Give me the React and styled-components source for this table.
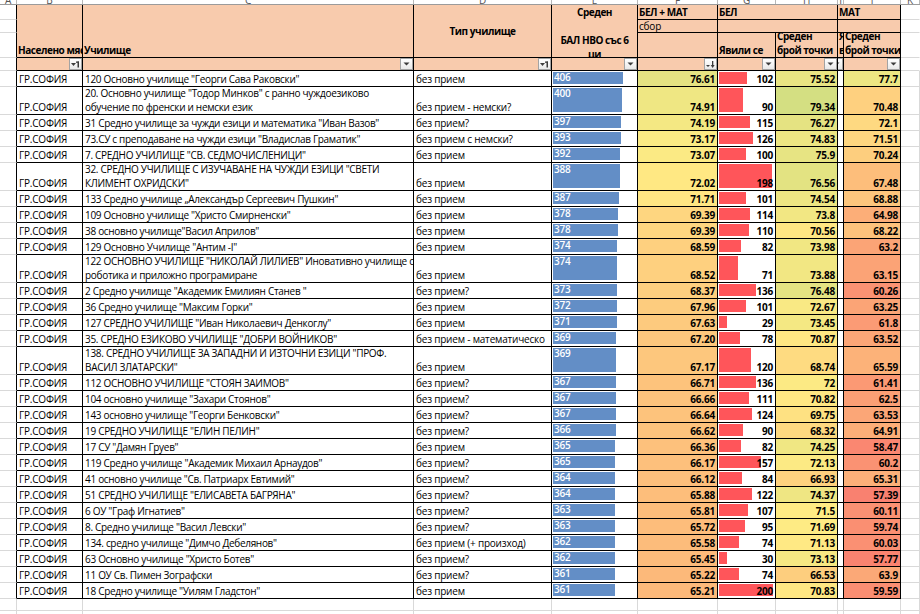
import React from "react";
import styled, { createGlobalStyle } from "styled-components";

// sheet columns: A (narrow) .. J, then K as the grey leftover
const GRID = "17px 66px 331px 138px 86px 80px 58px 62px 6px 57px 1fr";
const LINE = "#000";
const GRIDLINE = "#d9d9d9";
const PEACH = "#f8cbad";

const RED = [248, 105, 107];
const YEL = [255, 235, 132];
const GRN = [99, 190, 123];

function scale(v, lo, mid, hi) {
  let a, b, t;
  if (v <= mid) {
    a = RED; b = YEL; t = (v - lo) / (mid - lo);
  } else {
    a = YEL; b = GRN; t = (v - mid) / (hi - mid);
  }
  t = Math.max(0, Math.min(1, t));
  const c = a.map((x, i) => Math.round(x + (b[i] - x) * t));
  return `rgb(${c.join(",")})`;
}

const rows = [
  { name: ['120 Основно училище "Георги Сава Раковски"'], type: "без прием", bal: 406, sum: "76.61", bel: 102, belAvg: "75.52", mat: "77.7" },
  { name: ['20. Основно училище "Тодор Минков" с ранно чуждоезиково', "обучение по френски и немски език"], type: "без прием - немски?", bal: 400, sum: "74.91", bel: 90, belAvg: "79.34", mat: "70.48" },
  { name: ['31 Средно училище за чужди езици и математика "Иван Вазов"'], type: "без прием?", bal: 397, sum: "74.19", bel: 115, belAvg: "76.27", mat: "72.1" },
  { name: ['73.СУ с преподаване на чужди езици "Владислав Граматик"'], type: "без прием с немски?", bal: 393, sum: "73.17", bel: 126, belAvg: "74.83", mat: "71.51" },
  { name: ['7. СРЕДНО УЧИЛИЩЕ "СВ. СЕДМОЧИСЛЕНИЦИ"'], type: "без прием", bal: 392, sum: "73.07", bel: 100, belAvg: "75.9", mat: "70.24" },
  { name: ['32. СРЕДНО УЧИЛИЩЕ С ИЗУЧАВАНЕ НА ЧУЖДИ ЕЗИЦИ "СВЕТИ', 'КЛИМЕНТ ОХРИДСКИ"'], type: "без прием", bal: 388, sum: "72.02", bel: 198, belAvg: "76.56", mat: "67.48" },
  { name: ['133 Средно училище „Александър Сергеевич Пушкин"'], type: "без прием", bal: 387, sum: "71.71", bel: 101, belAvg: "74.54", mat: "68.88" },
  { name: ['109 Основно училище "Христо Смирненски"'], type: "без прием", bal: 378, sum: "69.39", bel: 114, belAvg: "73.8", mat: "64.98" },
  { name: ['38 основно училище"Васил Априлов"'], type: "без прием", bal: 378, sum: "69.39", bel: 110, belAvg: "70.56", mat: "68.22" },
  { name: ['129 Основно Училище "Антим -I"'], type: "без прием", bal: 374, sum: "68.59", bel: 82, belAvg: "73.98", mat: "63.2" },
  { name: ['122 ОСНОВНО УЧИЛИЩЕ "НИКОЛАЙ ЛИЛИЕВ" Иновативно училище с', "роботика и приложно програмиране"], type: "без прием", bal: 374, sum: "68.52", bel: 71, belAvg: "73.88", mat: "63.15" },
  { name: ['2 Средно училище "Академик Емилиян Станев "'], type: "без прием?", bal: 373, sum: "68.37", bel: 136, belAvg: "76.48", mat: "60.26" },
  { name: ['36 Средно училище "Максим Горки"'], type: "без прием", bal: 372, sum: "67.96", bel: 101, belAvg: "72.67", mat: "63.25" },
  { name: ['127 СРЕДНО УЧИЛИЩЕ "Иван Николаевич Денкоглу"'], type: "без прием", bal: 371, sum: "67.63", bel: 29, belAvg: "73.45", mat: "61.8" },
  { name: ['35. СРЕДНО ЕЗИКОВО УЧИЛИЩЕ "ДОБРИ ВОЙНИКОВ"'], type: "без прием - математическо", bal: 369, sum: "67.20", bel: 78, belAvg: "70.87", mat: "63.52" },
  { name: ['138. СРЕДНО УЧИЛИЩЕ ЗА ЗАПАДНИ И ИЗТОЧНИ ЕЗИЦИ "ПРОФ.', 'ВАСИЛ ЗЛАТАРСКИ"'], type: "без прием", bal: 369, sum: "67.17", bel: 120, belAvg: "68.74", mat: "65.59" },
  { name: ['112 ОСНОВНО УЧИЛИЩЕ "СТОЯН ЗАИМОВ"'], type: "без прием?", bal: 367, sum: "66.71", bel: 136, belAvg: "72", mat: "61.41" },
  { name: ['104 основно училище "Захари Стоянов"'], type: "без прием?", bal: 367, sum: "66.66", bel: 111, belAvg: "70.82", mat: "62.5" },
  { name: ['143 основно училище "Георги Бенковски"'], type: "без прием?", bal: 367, sum: "66.64", bel: 124, belAvg: "69.75", mat: "63.53" },
  { name: ['19 СРЕДНО УЧИЛИЩЕ "ЕЛИН ПЕЛИН"'], type: "без прием?", bal: 366, sum: "66.62", bel: 90, belAvg: "68.32", mat: "64.91" },
  { name: ['17 СУ "Дамян Груев"'], type: "без прием", bal: 365, sum: "66.36", bel: 82, belAvg: "74.25", mat: "58.47" },
  { name: ['119 Средно училище "Академик Михаил Арнаудов"'], type: "без прием?", bal: 365, sum: "66.17", bel: 157, belAvg: "72.13", mat: "60.2" },
  { name: ['41 основно училище "Св. Патриарх Евтимий"'], type: "без прием?", bal: 364, sum: "66.12", bel: 84, belAvg: "66.93", mat: "65.31" },
  { name: ['51 СРЕДНО УЧИЛИЩЕ "ЕЛИСАВЕТА БАГРЯНА"'], type: "без прием?", bal: 364, sum: "65.88", bel: 122, belAvg: "74.37", mat: "57.39" },
  { name: ['6 ОУ "Граф Игнатиев"'], type: "без прием?", bal: 363, sum: "65.81", bel: 107, belAvg: "71.5", mat: "60.11" },
  { name: ['8. Средно училище "Васил Левски"'], type: "без прием?", bal: 363, sum: "65.72", bel: 95, belAvg: "71.69", mat: "59.74" },
  { name: ['134. средно училище "Димчо Дебелянов"'], type: "без прием (+ произход)", bal: 362, sum: "65.58", bel: 74, belAvg: "71.13", mat: "60.03" },
  { name: ['63 Основно училище "Христо Ботев"'], type: "без прием?", bal: 362, sum: "65.45", bel: 30, belAvg: "73.13", mat: "57.77" },
  { name: ["11 ОУ Св. Пимен Зографски"], type: "без прием?", bal: 361, sum: "65.22", bel: 74, belAvg: "66.53", mat: "63.9" },
  { name: ['18 Средно училище "Уилям Гладстон"'], type: "без прием", bal: 361, sum: "65.21", bel: 200, belAvg: "70.83", mat: "59.59" },
];

const GlobalStyle = createGlobalStyle`
  * { box-sizing: border-box; }
  html, body { margin: 0; padding: 0; background: #fff; }
  body {
    font-family: "Open Sans", "Liberation Sans", sans-serif;
    font-size: 10px;
    letter-spacing: -0.2px;
    color: #000;
  }
`;

const Sheet = styled.div`
  width: 920px;
  height: 614px;
  overflow: hidden;
  background: #fff;
`;

const LetterStrip = styled.div`
  display: grid;
  grid-template-columns: ${GRID};
  height: 5px;
  overflow: hidden;
  border-bottom: 1px solid #9b9b9b;
`;

const Letter = styled.div`
  display: flex;
  justify-content: center;
  align-items: flex-end;
  overflow: hidden;
  border-right: 1px solid #b8b8b8;
  color: #555;
  line-height: 8px;
`;

const HeadGrid = styled.div`
  display: grid;
  grid-template-columns: ${GRID};
  grid-template-rows: 15px 13px 25px 13px;
`;

const HeadGutter = styled.div`
  grid-column: ${(p) => p.$col};
  grid-row: ${(p) => p.$row};
  border-bottom: 1px solid ${GRIDLINE};
  border-right: 1px solid ${(p) => (p.$edge ? LINE : "transparent")};
`;

const HeadCell = styled.div`
  grid-column: ${(p) => p.$col};
  grid-row: ${(p) => p.$row};
  background: ${PEACH};
  border-right: 1px solid ${LINE};
  border-bottom: 1px solid ${LINE};
  overflow: hidden;
  white-space: nowrap;
  display: flex;
  flex-direction: column;
  justify-content: ${(p) => ({ top: "flex-start", middle: "center", bottom: "flex-end" }[p.$v || "bottom"])};
  align-items: ${(p) => (p.$center ? "center" : "flex-start")};
  padding: 0 ${(p) => (p.$center ? "2px" : "1px")};
  font-weight: ${(p) => (p.$light ? 400 : 700)};
  letter-spacing: ${(p) => (p.$light ? "-0.2px" : "-0.45px")};
  line-height: 14px;
`;

const FilterCell = styled.div`
  grid-column: ${(p) => p.$col};
  grid-row: 4;
  background: ${PEACH};
  border-right: 1px solid ${LINE};
  border-bottom: 1px solid ${LINE};
  display: flex;
  justify-content: flex-end;
  overflow: hidden;
`;

const FilterButton = styled.div`
  flex: 0 0 13px;
  height: 12px;
  border: 1px solid #a3a3a3;
  background: linear-gradient(#ffffff, #e9e9e9);
  display: flex;
  align-items: center;
  justify-content: center;
`;

const DataRow = styled.div`
  display: grid;
  grid-template-columns: ${GRID};
  height: ${(p) => p.$h}px;
`;

const Gutter = styled.div`
  border-bottom: 1px solid ${GRIDLINE};
  border-right: 1px solid ${(p) => (p.$edge ? LINE : GRIDLINE)};
`;

const Cell = styled.div`
  position: relative;
  min-width: 0;
  overflow: hidden;
  white-space: nowrap;
  border-right: 1px solid ${LINE};
  border-bottom: 1px solid ${LINE};
  display: flex;
  flex-direction: column;
  justify-content: ${(p) => (p.$top ? "flex-start" : "flex-end")};
  align-items: ${(p) => (p.$right ? "flex-end" : "flex-start")};
  padding: 0 2px;
  font-weight: ${(p) => (p.$bold ? 700 : 400)};
  letter-spacing: ${(p) => (p.$tight ? "-0.3px" : "-0.2px")};
  line-height: 13.5px;
`;

const Bar = styled.div`
  position: absolute;
  left: 1px;
  top: 1px;
  bottom: 2px;
  background: ${(p) => p.$color};
`;

const CellText = styled.span`
  position: relative;
  color: ${(p) => (p.$light ? "#fff" : "#000")};
  font-weight: ${(p) => (p.$light ? 600 : "inherit")};
`;

const GhostCell = styled.div`
  border-right: 1px solid ${GRIDLINE};
  border-bottom: 1px solid ${GRIDLINE};
`;

function DropIcon({ kind }) {
  if (kind === "filter") {
    return (
      <svg width="9" height="7" viewBox="0 0 9 7">
        <polygon points="0,2 5,2 2.5,5" fill="#3c3c3c" />
        <rect x="6.5" y="0.5" width="1.5" height="6" fill="#3c3c3c" />
        <rect x="5" y="0.5" width="3" height="1.3" fill="#3c3c3c" />
      </svg>
    );
  }
  if (kind === "sort") {
    return (
      <svg width="9" height="7" viewBox="0 0 9 7">
        <polygon points="0,4 4,4 2,6" fill="#3c3c3c" />
        <rect x="6" y="0" width="1.3" height="5" fill="#3c3c3c" />
        <polygon points="4.7,4 8.6,4 6.65,7" fill="#3c3c3c" />
      </svg>
    );
  }
  return (
    <svg width="7" height="4" viewBox="0 0 7 4">
      <polygon points="0.5,0.5 6.5,0.5 3.5,3.5" fill="#3c3c3c" />
    </svg>
  );
}

const letters = ["A", "B", "C", "D", "E", "F", "G", "H", "I", "J", "K"];

const filters = [
  { col: 2, kind: "filter" },
  { col: 3 },
  { col: 4, kind: "filter" },
  { col: 5 },
  { col: 6, kind: "sort" },
  { col: 7 },
  { col: 8 },
  { col: 9 },
  { col: 10 },
];

function Header() {
  return (
    <HeadGrid>
      {[1, 2, 3, 4].map((r) => (
        <HeadGutter key={"a" + r} $col={1} $row={r} $edge />
      ))}
      {[1, 2, 3, 4].map((r) => (
        <HeadGutter key={"k" + r} $col={11} $row={r} />
      ))}
      <HeadCell $col="2" $row="1 / 4">Населено място</HeadCell>
      <HeadCell $col="3" $row="1 / 4">Училище</HeadCell>
      <HeadCell $col="4" $row="1 / 4" $v="middle" $center>
        Тип училище
      </HeadCell>
      <HeadCell $col="5" $row="1 / 4" $v="top" $center>
        <span>Среден</span>
        <span>&nbsp;</span>
        <span>БАЛ НВО със 6</span>
        <span>ци</span>
      </HeadCell>
      <HeadCell $col="6" $row="1" $v="middle">БЕЛ + МАТ</HeadCell>
      <HeadCell $col="6" $row="2" $v="middle" $light>сбор</HeadCell>
      <HeadCell $col="6" $row="3" />
      <HeadCell $col="7 / 9" $row="1" $v="middle">БЕЛ</HeadCell>
      <HeadCell $col="7 / 9" $row="2" />
      <HeadCell $col="7" $row="3">Явили се</HeadCell>
      <HeadCell $col="8" $row="3">
        <span>Среден</span>
        <span>брой точки</span>
      </HeadCell>
      <HeadCell $col="9 / 11" $row="1" $v="middle">МАТ</HeadCell>
      <HeadCell $col="9 / 11" $row="2" />
      <HeadCell $col="9" $row="3">
        <span>Я</span>
        <span>в</span>
      </HeadCell>
      <HeadCell $col="10" $row="3">
        <span>Среден</span>
        <span>брой точки</span>
      </HeadCell>
      {filters.map((f) => (
        <FilterCell key={f.col} $col={f.col}>
          <FilterButton>
            <DropIcon kind={f.kind} />
          </FilterButton>
        </FilterCell>
      ))}
    </HeadGrid>
  );
}

function SchoolRow({ r }) {
  const h = r.name.length > 1 ? 28 : 16;
  const balWidth = 61.7 + (r.bal - 361) * 0.184;
  const belWidth = (r.bel / 200) * 54;
  return (
    <DataRow $h={h}>
      <Gutter $edge />
      <Cell>ГР.СОФИЯ</Cell>
      <Cell $tight>
        {r.name.map((line) => (
          <span key={line}>{line}</span>
        ))}
      </Cell>
      <Cell>{r.type}</Cell>
      <Cell $top>
        <Bar $color="#638ec6" style={{ width: balWidth }} />
        <CellText $light>{r.bal}</CellText>
      </Cell>
      <Cell $right $bold style={{ background: scale(parseFloat(r.sum), 53.5, 72.5, 96.7) }}>
        {r.sum}
      </Cell>
      <Cell $right $bold>
        <Bar $color="#ff555a" style={{ width: belWidth }} />
        <CellText>{r.bel}</CellText>
      </Cell>
      <Cell $right $bold style={{ background: scale(parseFloat(r.belAvg), 49, 71.5, 100) }}>
        {r.belAvg}
      </Cell>
      <Cell />
      <Cell $right $bold style={{ background: scale(parseFloat(r.mat), 53.5, 75, 98) }}>
        {r.mat}
      </Cell>
      <Gutter />
    </DataRow>
  );
}

function EmptyRow({ h }) {
  return (
    <DataRow $h={h}>
      {letters.map((l, i) => (
        <GhostCell key={l + i} />
      ))}
    </DataRow>
  );
}

export default function App() {
  return (
    <Sheet>
      <GlobalStyle />
      <LetterStrip>
        {letters.map((l) => (
          <Letter key={l}>{l}</Letter>
        ))}
      </LetterStrip>
      <Header />
      {rows.map((r, i) => (
        <SchoolRow key={i} r={r} />
      ))}
      <EmptyRow h={12} />
      <EmptyRow h={16} />
    </Sheet>
  );
}
